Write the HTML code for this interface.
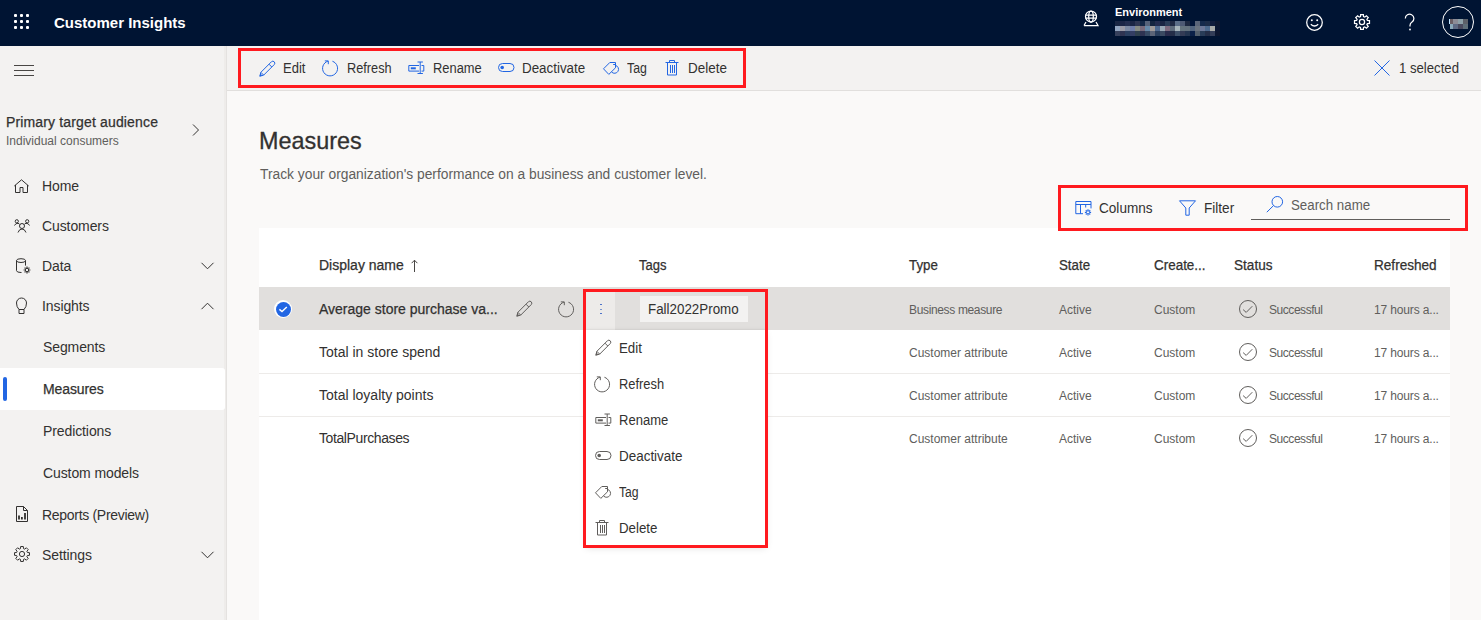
<!DOCTYPE html>
<html><head><meta charset="utf-8">
<style>
*{margin:0;padding:0;box-sizing:border-box}
html,body{width:1481px;height:620px;overflow:hidden;background:#faf9f8;font-family:"Liberation Sans",sans-serif;color:#323130}
.a{position:absolute;white-space:nowrap;line-height:1}
svg{position:absolute;overflow:visible;fill:none}
#hdr{position:absolute;left:0;top:0;width:1481px;height:46px;background:#001433}
#side{position:absolute;left:0;top:46px;width:227px;height:574px;background:#f3f2f1;border-right:1px solid #e4e2e0;box-shadow:inset -2px 0 #eeecea}
#tb{position:absolute;left:227px;top:46px;width:1254px;height:45px;background:#f3f2f1;border-bottom:1px solid #e1dfdd}
#panel{position:absolute;left:259px;top:228px;width:1191px;height:392px;background:#fff}
.red{position:absolute;border:3px solid #ff1a1f}
.tbt{font-size:14px;color:#323130;transform-origin:0 0}
.nav{font-size:14px;color:#323130;letter-spacing:-0.1px}
.th{font-size:14px;color:#323130;-webkit-text-stroke:0.25px #323130;transform-origin:0 0}
.sb{-webkit-text-stroke:0.25px #323130}
.td{font-size:12px;color:#605e5c}
.rn{font-size:14px;color:#323130}
.mi{font-size:14px;color:#323130;transform-origin:0 0}
.bl{stroke:#2266e3;stroke-width:1}
.dk{stroke:#323130;stroke-width:1}
.gr{stroke:#605e5c;stroke-width:1}
.wh{stroke:#fff;stroke-width:1.25}
</style></head><body>
<!-- ============ HEADER ============ -->
<div id="hdr">
  <div style="position:absolute;left:14px;top:14px;width:3px;height:3px;border-radius:1px;background:#fff;box-shadow:6px 0 #fff,12px 0 #fff,0 6px #fff,6px 6px #fff,12px 6px #fff,0 12px #fff,6px 12px #fff,12px 12px #fff"></div>
  <div class="a" style="left:54px;top:15px;font-size:15px;font-weight:bold;color:#fff">Customer Insights</div>
  <!-- globe icon -->
  <svg style="left:1083px;top:10px" width="16" height="16" viewBox="0 0 16 16">
    <circle class="wh" cx="8" cy="6.5" r="5.5"/>
    <ellipse class="wh" cx="8" cy="6.5" rx="2.3" ry="5.5"/>
    <path class="wh" d="M2.5 5h11M2.5 8h11M1 15.5h14l-2-3.5M1 15.5l2-3.5"/>
  </svg>
  <div class="a" style="left:1115px;top:7px;font-size:11px;font-weight:bold;color:#fff">Environment</div>
  <div id="pix" style="position:absolute;left:1115px;top:21px;width:105px;height:15px"><i style="position:absolute;left:0px;top:0px;width:5px;height:5px;background:#1a2744"></i><i style="position:absolute;left:5px;top:0px;width:5px;height:5px;background:#1b2546"></i><i style="position:absolute;left:10px;top:0px;width:5px;height:5px;background:#232d4f"></i><i style="position:absolute;left:15px;top:0px;width:5px;height:5px;background:#1a2545"></i><i style="position:absolute;left:20px;top:0px;width:5px;height:5px;background:#2d3552"></i><i style="position:absolute;left:25px;top:0px;width:5px;height:5px;background:#132848"></i><i style="position:absolute;left:30px;top:0px;width:5px;height:5px;background:#55627a"></i><i style="position:absolute;left:35px;top:0px;width:5px;height:5px;background:#142440"></i><i style="position:absolute;left:40px;top:0px;width:5px;height:5px;background:#232b4e"></i><i style="position:absolute;left:45px;top:0px;width:5px;height:5px;background:#1a2644"></i><i style="position:absolute;left:50px;top:0px;width:5px;height:5px;background:#2a3d58"></i><i style="position:absolute;left:55px;top:0px;width:5px;height:5px;background:#1e2a44"></i><i style="position:absolute;left:60px;top:0px;width:5px;height:5px;background:#5a6e88"></i><i style="position:absolute;left:65px;top:0px;width:5px;height:5px;background:#4e5a74"></i><i style="position:absolute;left:70px;top:0px;width:5px;height:5px;background:#1d2840"></i><i style="position:absolute;left:75px;top:0px;width:5px;height:5px;background:#021538"></i><i style="position:absolute;left:80px;top:0px;width:5px;height:5px;background:#5a6478"></i><i style="position:absolute;left:85px;top:0px;width:5px;height:5px;background:#152a4c"></i><i style="position:absolute;left:90px;top:0px;width:5px;height:5px;background:#1c2c48"></i><i style="position:absolute;left:95px;top:0px;width:5px;height:5px;background:#101c3c"></i><i style="position:absolute;left:100px;top:0px;width:5px;height:5px;background:#0c1630"></i><i style="position:absolute;left:0px;top:5px;width:5px;height:5px;background:#92a5c0"></i><i style="position:absolute;left:5px;top:5px;width:5px;height:5px;background:#9a9aa6"></i><i style="position:absolute;left:10px;top:5px;width:5px;height:5px;background:#7b88a2"></i><i style="position:absolute;left:15px;top:5px;width:5px;height:5px;background:#6f7da8"></i><i style="position:absolute;left:20px;top:5px;width:5px;height:5px;background:#858a84"></i><i style="position:absolute;left:25px;top:5px;width:5px;height:5px;background:#776a7c"></i><i style="position:absolute;left:30px;top:5px;width:5px;height:5px;background:#6689aa"></i><i style="position:absolute;left:35px;top:5px;width:5px;height:5px;background:#a09a9a"></i><i style="position:absolute;left:40px;top:5px;width:5px;height:5px;background:#4f6990"></i><i style="position:absolute;left:45px;top:5px;width:5px;height:5px;background:#98a8b6"></i><i style="position:absolute;left:50px;top:5px;width:5px;height:5px;background:#7e6c80"></i><i style="position:absolute;left:55px;top:5px;width:5px;height:5px;background:#5d6c7c"></i><i style="position:absolute;left:60px;top:5px;width:5px;height:5px;background:#a6b6bc"></i><i style="position:absolute;left:65px;top:5px;width:5px;height:5px;background:#65747e"></i><i style="position:absolute;left:70px;top:5px;width:5px;height:5px;background:#64727e"></i><i style="position:absolute;left:75px;top:5px;width:5px;height:5px;background:#52647e"></i><i style="position:absolute;left:80px;top:5px;width:5px;height:5px;background:#6a7380"></i><i style="position:absolute;left:85px;top:5px;width:5px;height:5px;background:#6d7898"></i><i style="position:absolute;left:90px;top:5px;width:5px;height:5px;background:#4d6a8e"></i><i style="position:absolute;left:95px;top:5px;width:5px;height:5px;background:#a8aaa8"></i><i style="position:absolute;left:100px;top:5px;width:5px;height:5px;background:#0a1632"></i><i style="position:absolute;left:0px;top:10px;width:5px;height:5px;background:#36405c"></i><i style="position:absolute;left:5px;top:10px;width:5px;height:5px;background:#2f3452"></i><i style="position:absolute;left:10px;top:10px;width:5px;height:5px;background:#2b3f60"></i><i style="position:absolute;left:15px;top:10px;width:5px;height:5px;background:#333e64"></i><i style="position:absolute;left:20px;top:10px;width:5px;height:5px;background:#2f404e"></i><i style="position:absolute;left:25px;top:10px;width:5px;height:5px;background:#2e3352"></i><i style="position:absolute;left:30px;top:10px;width:5px;height:5px;background:#374a64"></i><i style="position:absolute;left:35px;top:10px;width:5px;height:5px;background:#5c6478"></i><i style="position:absolute;left:40px;top:10px;width:5px;height:5px;background:#2b3f5e"></i><i style="position:absolute;left:45px;top:10px;width:5px;height:5px;background:#3b4a62"></i><i style="position:absolute;left:50px;top:10px;width:5px;height:5px;background:#2a2c4c"></i><i style="position:absolute;left:55px;top:10px;width:5px;height:5px;background:#232e48"></i><i style="position:absolute;left:60px;top:10px;width:5px;height:5px;background:#3c5068"></i><i style="position:absolute;left:65px;top:10px;width:5px;height:5px;background:#333b55"></i><i style="position:absolute;left:70px;top:10px;width:5px;height:5px;background:#243550"></i><i style="position:absolute;left:75px;top:10px;width:5px;height:5px;background:#0a2048"></i><i style="position:absolute;left:80px;top:10px;width:5px;height:5px;background:#525e6c"></i><i style="position:absolute;left:85px;top:10px;width:5px;height:5px;background:#283c58"></i><i style="position:absolute;left:90px;top:10px;width:5px;height:5px;background:#242e48"></i><i style="position:absolute;left:95px;top:10px;width:5px;height:5px;background:#333d58"></i><i style="position:absolute;left:100px;top:10px;width:5px;height:5px;background:#0c1630"></i></div>
  <!-- smiley -->
  <svg style="left:1306px;top:14px" width="17" height="17" viewBox="0 0 17 17">
    <circle class="wh" cx="8.5" cy="8.5" r="7.8"/>
    <circle cx="5.8" cy="6.3" r="1" fill="#fff"/><circle cx="11.2" cy="6.3" r="1" fill="#fff"/>
    <path class="wh" d="M4.8 10.2q3.7 3.6 7.4 0"/>
  </svg>
  <!-- gear -->
  <svg style="left:1354px;top:14px" width="16" height="16" viewBox="0 0 16 16" id="gearH"><path class="wh" d="M15.48 6.66 L15.48 9.34 L13.39 9.52 L12.89 10.74 L14.24 12.35 L12.35 14.24 L10.74 12.89 L9.52 13.39 L9.34 15.48 L6.66 15.48 L6.48 13.39 L5.26 12.89 L3.65 14.24 L1.76 12.35 L3.11 10.74 L2.61 9.52 L0.52 9.34 L0.52 6.66 L2.61 6.48 L3.11 5.26 L1.76 3.65 L3.65 1.76 L5.26 3.11 L6.48 2.61 L6.66 0.52 L9.34 0.52 L9.52 2.61 L10.74 3.11 L12.35 1.76 L14.24 3.65 L12.89 5.26 L13.39 6.48Z"/><circle class="wh" cx="8" cy="8" r="2.6"/></svg>
  <!-- question -->
  <svg style="left:1404px;top:14px" width="12" height="17" viewBox="0 0 12 17">
    <path class="wh" stroke-width="1.3" d="M1.3 4.5a4.3 4.3 0 1 1 6.7 3.6c-1.3.9-2 1.8-2 3.3v1.2"/>
    <circle cx="6" cy="15.5" r="0.9" fill="#fff"/>
  </svg>
  <!-- avatar -->
  <div style="position:absolute;left:1442px;top:6px;width:32px;height:32px;border-radius:50%;border:1px solid #fff"></div>
  <div id="avpix" style="position:absolute;left:1450px;top:19px;width:18px;height:10px"><i style="position:absolute;left:0px;top:0px;width:3px;height:5px;background:#6a5e64"></i><i style="position:absolute;left:3px;top:0px;width:5px;height:5px;background:#8c8c96"></i><i style="position:absolute;left:8px;top:0px;width:5px;height:5px;background:#8ca0a8"></i><i style="position:absolute;left:13px;top:0px;width:5px;height:5px;background:#5c6068"></i><i style="position:absolute;left:0px;top:5px;width:3px;height:5px;background:#8aaabb"></i><i style="position:absolute;left:3px;top:5px;width:5px;height:5px;background:#5e6a84"></i><i style="position:absolute;left:8px;top:5px;width:5px;height:5px;background:#4a4a5e"></i><i style="position:absolute;left:13px;top:5px;width:5px;height:5px;background:#5e6e78"></i><i style="position:absolute;left:-1px;top:0;width:1px;height:5px;background:#bfe4ff"></i></div>
</div>

<!-- ============ SIDEBAR ============ -->
<div id="side"></div>
<svg style="left:14px;top:65px" width="20" height="12" viewBox="0 0 20 12">
  <path stroke="#484644" stroke-width="1" d="M0 0.5h20M0 5.5h20M0 10.5h20"/>
</svg>
<div class="a sb" style="left:6px;top:115px;font-size:14px;letter-spacing:0.15px;color:#323130">Primary target audience</div>
<div class="a" style="left:6px;top:135px;font-size:12px;color:#605e5c">Individual consumers</div>
<svg style="left:192px;top:124px" width="8" height="12" viewBox="0 0 8 12"><path class="dk" d="M1 0.5l5.5 5.5-5.5 5.5"/></svg>

<!-- nav icons -->
<svg style="left:14px;top:179px" width="16" height="15" viewBox="0 0 16 15">
  <path class="dk" d="M0.3 7L7.5 0.8 14.7 7M1.5 6v7.5h4.5V8.5h3v5h4.5V6"/>
</svg>
<svg style="left:14px;top:219px" width="16" height="14" viewBox="0 0 16 14">
  <circle class="dk" cx="2.8" cy="2.3" r="1.6"/><circle class="dk" cx="13.2" cy="2.3" r="1.6"/><circle class="dk" cx="8" cy="7" r="2.5"/>
  <path class="dk" d="M0.5 6.5q1-2.4 3.5-2.2 1.3.2 2 1.3M15.5 6.5q-1-2.4-3.5-2.2-1.3.2-2 1.3M4 13.5q1.2-3.5 4-3.5t4 3.5"/>
</svg>
<svg style="left:16px;top:258px" width="16" height="16" viewBox="0 0 16 16">
  <ellipse class="dk" cx="5" cy="2.6" rx="4.5" ry="1.9"/>
  <path class="dk" d="M0.5 2.6v10q0 1.9 4.5 1.9h0.5M9.5 2.6v5"/>
  <circle class="dk" cx="11" cy="12" r="1.7"/>
  <path stroke="#323130" stroke-width="1.2" d="M11 8.6v1.3M11 14.1v1.3M7.6 12h1.3M13.1 12h1.3M8.6 9.6l.9.9M12.5 13.5l.9.9M8.6 14.4l.9-.9M12.5 10.5l.9-.9"/>
</svg>
<svg style="left:16px;top:297px" width="11" height="18" viewBox="0 0 11 18">
  <path class="dk" d="M3 12.5q-2.5-2.5-2.5-6.5a5 5 0 0 1 10 0q0 4-2.5 6.5M3 12.5h5v4h-5z"/>
</svg>
<svg style="left:15px;top:506px" width="14" height="16" viewBox="0 0 14 16">
  <path class="dk" d="M1.5 0.5h7l4 4v11h-11z"/>
  <path stroke="#323130" stroke-width="1.8" d="M4 13.6v-4.2M6.9 13.6v-2.6M10 13.6v-6.6"/>
  <path class="dk" d="M8.5 0.5v4h4"/>
</svg>
<svg style="left:14px;top:546px" width="16" height="16" viewBox="0 0 16 16" id="gearS"><path class="dk" d="M15.48 6.66 L15.48 9.34 L13.39 9.52 L12.89 10.74 L14.24 12.35 L12.35 14.24 L10.74 12.89 L9.52 13.39 L9.34 15.48 L6.66 15.48 L6.48 13.39 L5.26 12.89 L3.65 14.24 L1.76 12.35 L3.11 10.74 L2.61 9.52 L0.52 9.34 L0.52 6.66 L2.61 6.48 L3.11 5.26 L1.76 3.65 L3.65 1.76 L5.26 3.11 L6.48 2.61 L6.66 0.52 L9.34 0.52 L9.52 2.61 L10.74 3.11 L12.35 1.76 L14.24 3.65 L12.89 5.26 L13.39 6.48Z"/><circle class="dk" cx="8" cy="8" r="2.6"/></svg>

<div class="a nav" style="left:42px;top:179px">Home</div>
<div class="a nav" style="left:42px;top:219px">Customers</div>
<div class="a nav" style="left:42px;top:259px">Data</div>
<div class="a nav" style="left:42px;top:299px">Insights</div>
<svg style="left:201px;top:262px" width="13" height="8" viewBox="0 0 13 8"><path class="dk" d="M0.5 0.8l6 6 6-6"/></svg>
<svg style="left:201px;top:302px" width="13" height="8" viewBox="0 0 13 8"><path class="dk" d="M0.5 7.2l6-6 6 6"/></svg>
<div class="a nav" style="left:43px;top:340px">Segments</div>
<div style="position:absolute;left:0;top:368px;width:225px;height:42px;background:#fff;border-radius:0 3px 3px 0"></div>
<div style="position:absolute;left:3px;top:377px;width:4px;height:24px;background:#2266e3;border-radius:2px"></div>
<div class="a nav sb" style="left:43px;top:382px">Measures</div>
<div class="a nav" style="left:43px;top:424px">Predictions</div>
<div class="a nav" style="left:43px;top:466px">Custom models</div>
<div class="a nav" style="left:42px;top:508px;letter-spacing:-0.3px">Reports (Preview)</div>
<div class="a nav" style="left:42px;top:548px">Settings</div>
<svg style="left:201px;top:551px" width="13" height="8" viewBox="0 0 13 8"><path class="dk" d="M0.5 0.8l6 6 6-6"/></svg>

<!-- ============ TOOLBAR ============ -->
<div id="tb"></div>
<svg style="left:258.5px;top:59.5px" width="17" height="17" viewBox="0 0 17 17">
  <path class="bl" d="M0.8 16.2L1.86 12.32L12.49 1.69A2 2 0 0 1 15.31 4.51L4.68 15.14ZM1.86 12.32L4.68 15.14M10 4.2L12.8 7"/><path fill="#2266e3" d="M0.6 16.4L1.4 13.6 3.4 15.6z"/>
</svg>
<div class="a tbt" style="left:283px;top:61px;transform:scaleX(0.93)">Edit</div>
<svg style="left:322px;top:59.5px" width="17" height="17" viewBox="0 0 17 17">
  <path class="bl" d="M10.44 1.26A7.5 7.5 0 1 1 5.9 1.2M2.8 0.9H6.3V4.2"/>
</svg>
<div class="a tbt" style="left:347px;top:61px;transform:scaleX(0.91)">Refresh</div>
<svg style="left:408px;top:61px" width="17" height="13" viewBox="0 0 17 13">
  <path class="bl" d="M11 4.5H0.8v5.6H11M13.5 4.5h2.3v5.6h-2.3M12.2 1v11.5M9.5 1h5.4M9.5 12.5h5.4"/>
  <rect x="2.8" y="6.3" width="5" height="2" fill="#2266e3"/>
</svg>
<div class="a tbt" style="left:433px;top:61px;transform:scaleX(0.92)">Rename</div>
<svg style="left:498px;top:63px" width="17" height="10" viewBox="0 0 17 10">
  <rect class="bl" x="0.5" y="0.5" width="15.5" height="8" rx="4"/>
  <circle cx="4.2" cy="4.5" r="1.8" fill="#2266e3"/>
</svg>
<div class="a tbt" style="left:522px;top:61px;transform:scaleX(0.955)">Deactivate</div>
<svg style="left:603px;top:61px" width="17" height="15" viewBox="0 0 17 15">
  <path class="bl" d="M0.5 7.8L6.8 1.5H12.5V6.8L5.8 13.4ZM10.2 3.5H12.5M12.5 4.4A4 4 0 1 1 8.6 11"/>
</svg>
<div class="a tbt" style="left:627px;top:61px;transform:scaleX(0.88)">Tag</div>
<svg style="left:665px;top:59px" width="14" height="17" viewBox="0 0 14 17">
  <path class="bl" d="M0.5 3.5h13M4.5 3.5V1.5h5v2M2.5 3.5v12.5h9V3.5M5.5 6v8M7.5 6v8M9.5 6v8"/>
</svg>
<div class="a tbt" style="left:688px;top:61px;transform:scaleX(0.96)">Delete</div>
<div class="red" style="left:238px;top:48px;width:508px;height:40px"></div>

<svg style="left:1374px;top:60px" width="16" height="16" viewBox="0 0 16 16">
  <path class="bl" d="M0.5 0.5l15 15M15.5 0.5l-15 15"/>
</svg>
<div class="a tbt" style="left:1399px;top:61px;transform:scaleX(0.94)">1 selected</div>

<!-- ============ CONTENT ============ -->
<div class="a" style="left:259px;top:130px;font-size:23.4px;color:#323130;-webkit-text-stroke:0.3px #323130">Measures</div>
<div class="a" style="left:260px;top:168px;font-size:13.8px;color:#605e5c">Track your organization's performance on a business and customer level.</div>

<div id="panel"></div>
<!-- columns/filter/search -->
<svg style="left:1075px;top:200px" width="17" height="16" viewBox="0 0 17 16">
  <path class="bl" d="M8 13.7H0.8V1.5H16V8.4M0.8 4.5H16M5.5 4.5V13.7M10.7 4.5V7.5"/>
  <circle class="bl" cx="13" cy="12.3" r="1.6"/>
  <path stroke="#2266e3" stroke-width="1.2" d="M13 9.2v1.2M13 14.2v1.2M9.9 12.3h1.2M14.9 12.3h1.2M10.8 10.1l.8.8M14.4 13.7l.8.8M10.8 14.5l.8-.8M14.4 10.9l.8-.8"/>
</svg>
<div class="a tbt" style="left:1099px;top:201px;transform:scaleX(0.97)">Columns</div>
<svg style="left:1179px;top:200px" width="17" height="16" viewBox="0 0 17 16">
  <path class="bl" d="M0.5 0.8h16L10.2 8v7.2H6.8V8z"/>
</svg>
<div class="a tbt" style="left:1204px;top:201px;transform:scaleX(0.97)">Filter</div>
<svg style="left:1266px;top:196px" width="18" height="17" viewBox="0 0 18 17">
  <circle class="bl" cx="11.3" cy="5.8" r="5.3"/>
  <path class="bl" d="M7.5 9.6L0.8 16.2"/>
</svg>
<div class="a tbt" style="left:1291px;top:198px;color:#605e5c;transform:scaleX(0.95)">Search name</div>
<div style="position:absolute;left:1251px;top:219px;width:199px;height:1px;background:#605e5c"></div>
<div class="red" style="left:1058px;top:185px;width:410px;height:46px"></div>

<!-- table header -->
<div class="a th" style="left:319px;top:258px">Display name</div>
<svg style="left:410px;top:259px" width="8" height="13" viewBox="0 0 8 13"><path stroke="#484644" stroke-width="1" d="M4.5 1.2V13M1.6 4.2l2.9-3 2.9 3"/></svg>
<div class="a th" style="left:639px;top:258px;transform:scaleX(0.93)">Tags</div>
<div class="a th" style="left:909px;top:258px;transform:scaleX(0.95)">Type</div>
<div class="a th" style="left:1059px;top:258px;transform:scaleX(0.95)">State</div>
<div class="a th" style="left:1154px;top:258px;transform:scaleX(0.96)">Create...</div>
<div class="a th" style="left:1234px;top:258px;transform:scaleX(0.97)">Status</div>
<div class="a th" style="left:1374px;top:258px;transform:scaleX(0.97)">Refreshed</div>
<!-- rows -->
<div style="position:absolute;left:259px;top:287px;width:1191px;height:43px;background:#e1dfdd"></div>
<div style="position:absolute;left:259px;top:373px;width:1191px;height:1px;background:#edebe9"></div>
<div style="position:absolute;left:259px;top:416px;width:1191px;height:1px;background:#edebe9"></div>
<!-- checkbox -->
<div style="position:absolute;left:274px;top:300px;width:18px;height:18px;border-radius:50%;background:#fff"></div>
<div style="position:absolute;left:275.5px;top:301.5px;width:15px;height:15px;border-radius:50%;background:#2266e3"></div>
<svg style="left:274px;top:300px" width="18" height="18" viewBox="0 0 18 18"><path stroke="#fff" stroke-width="1.4" d="M5.4 9.4l2.6 2.2 4.8-4.6"/></svg>
<div class="a rn sb" style="left:319px;top:302px">Average store purchase va...</div>
<svg style="left:516px;top:300px" width="17" height="17" viewBox="0 0 17 17">
  <path class="gr" d="M0.8 16.2L1.86 12.32L12.49 1.69A2 2 0 0 1 15.31 4.51L4.68 15.14ZM1.86 12.32L4.68 15.14M10 4.2L12.8 7"/><path fill="#605e5c" d="M0.6 16.4L1.4 13.6 3.4 15.6z"/>
</svg>
<svg style="left:557.5px;top:300.5px" width="17" height="17" viewBox="0 0 17 17">
  <path class="gr" d="M10.44 1.26A7.5 7.5 0 1 1 5.9 1.2M2.8 0.9H6.3V4.2"/>
</svg>
<div style="position:absolute;left:586px;top:292px;width:29px;height:38px;background:#edebe9"></div>
<div style="position:absolute;left:600px;top:304px;width:2px;height:1px;background:#4d72c9;box-shadow:0 5px #7d97cf,0 9px #4d72c9"></div>
<div style="position:absolute;left:640px;top:296px;width:108px;height:26px;background:#f3f2f1"></div>
<div class="a" style="left:648px;top:302px;font-size:14px;color:#323130;transform-origin:0 0;transform:scaleX(0.955)">Fall2022Promo</div>
<div class="a td" style="left:909px;top:304px;letter-spacing:-0.35px">Business measure</div>
<div class="a td" style="left:1059px;top:304px">Active</div>
<div class="a td" style="left:1154px;top:304px">Custom</div>
<div class="a td" style="left:1269px;top:304px;letter-spacing:-0.45px">Successful</div>
<div class="a td" style="left:1374px;top:304px;letter-spacing:-0.15px">17 hours a...</div>

<div class="a rn" style="left:319px;top:345px">Total in store spend</div>
<div class="a td" style="left:909px;top:347px">Customer attribute</div>
<div class="a td" style="left:1059px;top:347px">Active</div>
<div class="a td" style="left:1154px;top:347px">Custom</div>
<div class="a td" style="left:1269px;top:347px;letter-spacing:-0.45px">Successful</div>
<div class="a td" style="left:1374px;top:347px;letter-spacing:-0.15px">17 hours a...</div>

<div class="a rn" style="left:319px;top:388px">Total loyalty points</div>
<div class="a td" style="left:909px;top:390px">Customer attribute</div>
<div class="a td" style="left:1059px;top:390px">Active</div>
<div class="a td" style="left:1154px;top:390px">Custom</div>
<div class="a td" style="left:1269px;top:390px;letter-spacing:-0.45px">Successful</div>
<div class="a td" style="left:1374px;top:390px;letter-spacing:-0.15px">17 hours a...</div>

<div class="a rn" style="left:319px;top:431px;letter-spacing:-0.4px">TotalPurchases</div>
<div class="a td" style="left:909px;top:433px">Customer attribute</div>
<div class="a td" style="left:1059px;top:433px">Active</div>
<div class="a td" style="left:1154px;top:433px">Custom</div>
<div class="a td" style="left:1269px;top:433px;letter-spacing:-0.45px">Successful</div>
<div class="a td" style="left:1374px;top:433px;letter-spacing:-0.15px">17 hours a...</div>
<svg style="left:1239px;top:300px" width="18" height="18" viewBox="0 0 18 18"><circle class="gr" cx="9" cy="9" r="8.5"/><path class="gr" d="M4.1 9.6l3.1 2.8 6.1-6.2"/></svg>
<svg style="left:1239px;top:343px" width="18" height="18" viewBox="0 0 18 18"><circle class="gr" cx="9" cy="9" r="8.5"/><path class="gr" d="M4.1 9.6l3.1 2.8 6.1-6.2"/></svg>
<svg style="left:1239px;top:386px" width="18" height="18" viewBox="0 0 18 18"><circle class="gr" cx="9" cy="9" r="8.5"/><path class="gr" d="M4.1 9.6l3.1 2.8 6.1-6.2"/></svg>
<svg style="left:1239px;top:429px" width="18" height="18" viewBox="0 0 18 18"><circle class="gr" cx="9" cy="9" r="8.5"/><path class="gr" d="M4.1 9.6l3.1 2.8 6.1-6.2"/></svg>
<!-- context menu -->
<div style="position:absolute;left:586px;top:330px;width:180px;height:215px;background:#fff;box-shadow:0 3px 7px rgba(0,0,0,.13),0 0 2px rgba(0,0,0,.11)"></div>
<svg style="left:594.5px;top:339px" width="17" height="17" viewBox="0 0 17 17">
  <path class="gr" d="M0.8 16.2L1.86 12.32L12.49 1.69A2 2 0 0 1 15.31 4.51L4.68 15.14ZM1.86 12.32L4.68 15.14M10 4.2L12.8 7"/><path fill="#605e5c" d="M0.6 16.4L1.4 13.6 3.4 15.6z"/>
</svg>
<div class="a mi" style="left:619px;top:341px;transform:scaleX(0.95)">Edit</div>
<svg style="left:594px;top:376px" width="17" height="17" viewBox="0 0 17 17">
  <path class="gr" d="M10.44 1.26A7.5 7.5 0 1 1 5.9 1.2M2.8 0.9H6.3V4.2"/>
</svg>
<div class="a mi" style="left:619px;top:377px;transform:scaleX(0.92)">Refresh</div>
<svg style="left:595px;top:413px" width="17" height="13" viewBox="0 0 17 13">
  <path class="gr" d="M11 4.5H0.8v5.6H11M13.5 4.5h2.3v5.6h-2.3M12.2 1v11.5M9.5 1h5.4M9.5 12.5h5.4"/>
  <rect x="2.8" y="6.3" width="5" height="2" fill="#605e5c"/>
</svg>
<div class="a mi" style="left:619px;top:413px;transform:scaleX(0.93)">Rename</div>
<svg style="left:595px;top:451px" width="17" height="10" viewBox="0 0 17 10">
  <rect class="gr" x="0.5" y="0.5" width="15.5" height="8" rx="4"/>
  <circle cx="4.2" cy="4.5" r="1.8" fill="#605e5c"/>
</svg>
<div class="a mi" style="left:619px;top:449px;transform:scaleX(0.96)">Deactivate</div>
<svg style="left:595px;top:485px" width="17" height="15" viewBox="0 0 17 15">
  <path class="gr" d="M0.5 7.8L6.8 1.5H12.5V6.8L5.8 13.4ZM10.2 3.5H12.5M12.5 4.4A4 4 0 1 1 8.6 11"/>
</svg>
<div class="a mi" style="left:619px;top:485px;transform:scaleX(0.87)">Tag</div>
<svg style="left:595px;top:519px" width="14" height="17" viewBox="0 0 14 17">
  <path class="gr" d="M0.5 3.5h13M4.5 3.5V1.5h5v2M2.5 3.5v12.5h9V3.5M5.5 6v8M7.5 6v8M9.5 6v8"/>
</svg>
<div class="a mi" style="left:619px;top:521px;transform:scaleX(0.95)">Delete</div>
<div class="red" style="left:583px;top:289px;width:185px;height:259px"></div>

</body></html>
